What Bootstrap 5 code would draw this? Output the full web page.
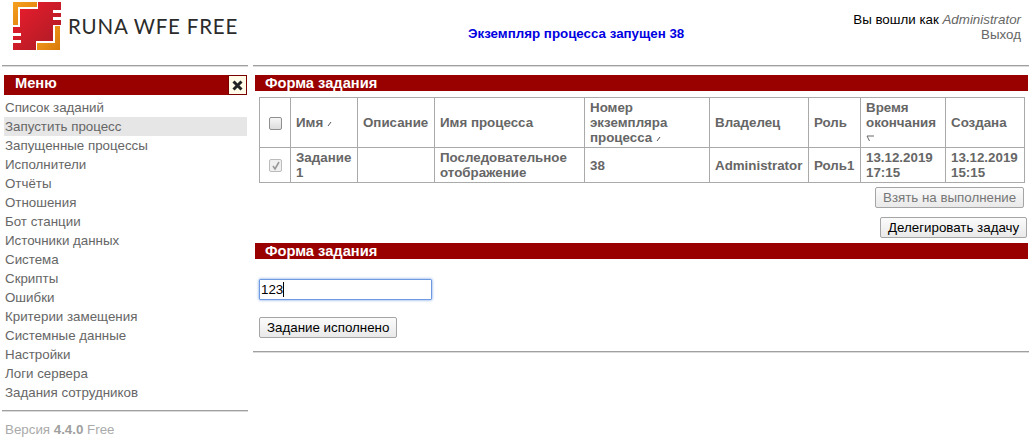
<!DOCTYPE html>
<html lang="ru">
<head>
<meta charset="utf-8">
<title>RUNA WFE</title>
<link href="https://cdn.jsdelivr.net/npm/bootstrap@5.3.0/dist/css/bootstrap.min.css" rel="stylesheet">
<style>
html,body{height:439px;overflow:hidden}
body{font-family:"Liberation Sans",Arial,sans-serif;font-size:13.33px;line-height:15px;color:#000;background:#fff}
.app-top{height:65px;padding:0 13px 0 13px}
.logo-word{font-family:Lato,sans-serif;font-size:20.5px;line-height:24px;color:#2b2b2b;letter-spacing:.8px;margin-left:7px;margin-top:14px;white-space:nowrap}
.logo-pic{display:block;margin-top:2px;flex:none}
.start-msg{color:#0000e0;font-weight:700;font-size:13.33px;margin:26px 0 0 0;position:absolute;left:468px}
.who{margin-left:auto;text-align:right;padding-top:12px;color:#000}
.who em{color:#666}
.who a{color:#666;text-decoration:none;display:block}
.rule{height:2px;background:linear-gradient(#a0a0a0 50%,#dcdcdc 50%);border:0;opacity:1;margin:0}
.rule-l{margin-left:2px;width:246px}
.rule-r{margin-left:253px;width:776px;margin-top:-2px}
.shell{padding-top:8px}
.side{width:253px;flex:0 0 253px;padding-left:4px}
.menu-head{width:243px;height:20px;background:#990000;color:#fff;font-weight:700;font-size:14.67px;line-height:17px;padding-left:11px}
.menu-close{width:19px;height:20px;background:#fffbe8;border:1px solid #7a0000;margin:0 0 0 auto;color:#000;display:flex;align-items:center;justify-content:center}
.menu-list{margin:3px 0 0;padding:0;list-style:none;width:243px}
.menu-list a{display:block;height:19px;line-height:19px;color:#666;text-decoration:none;padding-left:1px}
.menu-list a.picked{background:#e6e6e6}
.side-foot{margin:8px 0 0 -2px;width:246px}
.ver{color:#aaa;margin-top:10px;padding-left:1px}
.ver b{font-weight:700;color:#a0a0a0}
.work{flex:1 1 auto;padding-left:2px;width:776px}
.bar{height:16px;width:773px;background:#990000;color:#fff;font-weight:700;font-size:14.67px;line-height:17px;padding-left:10px}
.task-table{table-layout:fixed;border-collapse:collapse;width:765px;margin:6px 0 0 4px;font-weight:700;color:#666}
.task-table th,.task-table td{border:1px solid #aaa;padding:0 5px;vertical-align:middle;font-weight:700;line-height:15px}
.task-table .hd{height:50px}
.task-table .rw{height:35px}
.task-table .tick{padding:0;text-align:center}
.box{width:13px;height:13px;display:inline-block;border:1px solid #8f8f8f;border-radius:2px;background:linear-gradient(#f6f6f6,#dcdcdc);vertical-align:middle}
.box-on{border-color:#bbb;background:#f0f0f0;position:relative}
.box-on svg{position:absolute;left:1px;top:1px}
.sort{display:inline-block;vertical-align:baseline;margin-left:0}
.plain-btn{font-family:"Liberation Sans",Arial,sans-serif;font-size:13.33px;line-height:15px;height:21px;padding:0 7px;border:1px solid #a5a5a5;border-radius:2px;background:linear-gradient(#fbfbfb,#e9e9e9);color:#000;white-space:nowrap}
.plain-btn:disabled{color:#777;opacity:1}
.act-a{margin:4px 0 0 620px;width:149px}
.act-b{margin:9px 0 0 625px;width:147px}
.bar-two{margin-top:5px}
.answer{display:block;width:173px;height:21px;margin:20px 0 0 4px;border:1px solid #6d9ae0;box-shadow:0 0 3px #6d9ae0;padding:0 1px;font-size:13.33px;line-height:19px;color:#000;border-radius:1px;position:relative}
.caret-mark{display:inline-block;width:1px;height:15px;background:#000;vertical-align:-3px}
.done-btn{margin:17px 0 0 4px;width:138px;display:block}
.rule-end{width:776px;margin:13px 0 0 -2px}
</style>
</head>
<body>
<div class="app-top d-flex">
  <svg class="logo-pic" width="48" height="48" viewBox="0 0 48 48" aria-hidden="true">
    <defs>
      <linearGradient id="rd" x1="0" y1="0" x2="1" y2="1"><stop offset="0" stop-color="#ee1c2e"/><stop offset="1" stop-color="#a81c24"/></linearGradient>
      <linearGradient id="og" x1="0" y1="0" x2="1" y2="1"><stop offset="0" stop-color="#f7a11f"/><stop offset="1" stop-color="#d97a0c"/></linearGradient>
    </defs>
    <path d="M25 0H48V23H40V39H23V48H0V25H7V7H25Z" fill="url(#rd)"/>
    <path d="M0 0H24V5H5V23H0Z" fill="url(#og)"/>
    <path d="M47 24V48H24V41H42V24Z" fill="url(#og)"/>
    <path d="M40 8H48V11H40ZM40 15H48V18H40ZM0 31H8V34H0ZM0 38H8V41H0Z" fill="#fff"/>
  </svg>
  <div class="logo-word">RUNA WFE FREE</div>
  <div class="start-msg">Экземпляр процесса запущен 38</div>
  <div class="who">Вы вошли как <em>Administrator</em><a href="#">Выход</a></div>
</div>
<hr class="rule rule-l">
<hr class="rule rule-r">
<div class="shell d-flex">
  <aside class="side">
    <div class="menu-head d-flex"><span>Меню</span>
      <span class="menu-close"><svg width="11" height="11" viewBox="0 0 11 11"><path d="M1.5 1.5L9.5 9.5M9.5 1.5L1.5 9.5" stroke="#222" stroke-width="3"/></svg></span>
    </div>
    <ul class="menu-list">
      <li><a href="#">Список заданий</a></li>
      <li><a href="#" class="picked">Запустить процесс</a></li>
      <li><a href="#">Запущенные процессы</a></li>
      <li><a href="#">Исполнители</a></li>
      <li><a href="#">Отчёты</a></li>
      <li><a href="#">Отношения</a></li>
      <li><a href="#">Бот станции</a></li>
      <li><a href="#">Источники данных</a></li>
      <li><a href="#">Система</a></li>
      <li><a href="#">Скрипты</a></li>
      <li><a href="#">Ошибки</a></li>
      <li><a href="#">Критерии замещения</a></li>
      <li><a href="#">Системные данные</a></li>
      <li><a href="#">Настройки</a></li>
      <li><a href="#">Логи сервера</a></li>
      <li><a href="#">Задания сотрудников</a></li>
    </ul>
    <hr class="rule side-foot">
    <div class="ver">Версия <b>4.4.0</b> Free</div>
  </aside>
  <main class="work">
    <div class="bar">Форма задания</div>
    <table class="task-table">
      <colgroup><col style="width:31px"><col style="width:67px"><col style="width:77px"><col style="width:150px"><col style="width:125px"><col style="width:99px"><col style="width:52px"><col style="width:85px"><col style="width:79px"></colgroup>
      <tr class="hd">
        <th class="tick"><span class="box"></span></th>
        <th>Имя <svg class="sort" width="5" height="6" viewBox="0 0 5 6"><path d="M1 5L4 1" stroke="#555" fill="none"/></svg></th>
        <th>Описание</th>
        <th>Имя процесса</th>
        <th>Номер экземпляра процесса <svg class="sort" width="5" height="6" viewBox="0 0 5 6"><path d="M1 5L4 1" stroke="#555" fill="none"/></svg></th>
        <th>Владелец</th>
        <th>Роль</th>
        <th>Время окончания<br><svg width="9" height="7" viewBox="0 0 9 7"><path d="M1 1H8M1 1L3.5 6" stroke="#666" fill="none"/></svg></th>
        <th>Создана</th>
      </tr>
      <tr class="rw">
        <td class="tick"><span class="box box-on"><svg width="10" height="10" viewBox="0 0 10 10"><path d="M2 5L4 8L8 1" stroke="#999" stroke-width="1.6" fill="none"/></svg></span></td>
        <td>Задание 1</td>
        <td></td>
        <td>Последовательное отображение</td>
        <td>38</td>
        <td>Administrator</td>
        <td>Роль1</td>
        <td>13.12.2019 17:15</td>
        <td>13.12.2019 15:15</td>
      </tr>
    </table>
    <button class="plain-btn act-a d-block" disabled>Взять на выполнение</button>
    <button class="plain-btn act-b d-block">Делегировать задачу</button>
    <div class="bar bar-two">Форма задания</div>
    <div class="answer">123<span class="caret-mark"></span></div>
    <button class="plain-btn done-btn">Задание исполнено</button>
    <hr class="rule rule-end">
  </main>
</div>
<script src="https://cdn.jsdelivr.net/npm/bootstrap@5.3.0/dist/js/bootstrap.bundle.min.js"></script>
</body>
</html>
